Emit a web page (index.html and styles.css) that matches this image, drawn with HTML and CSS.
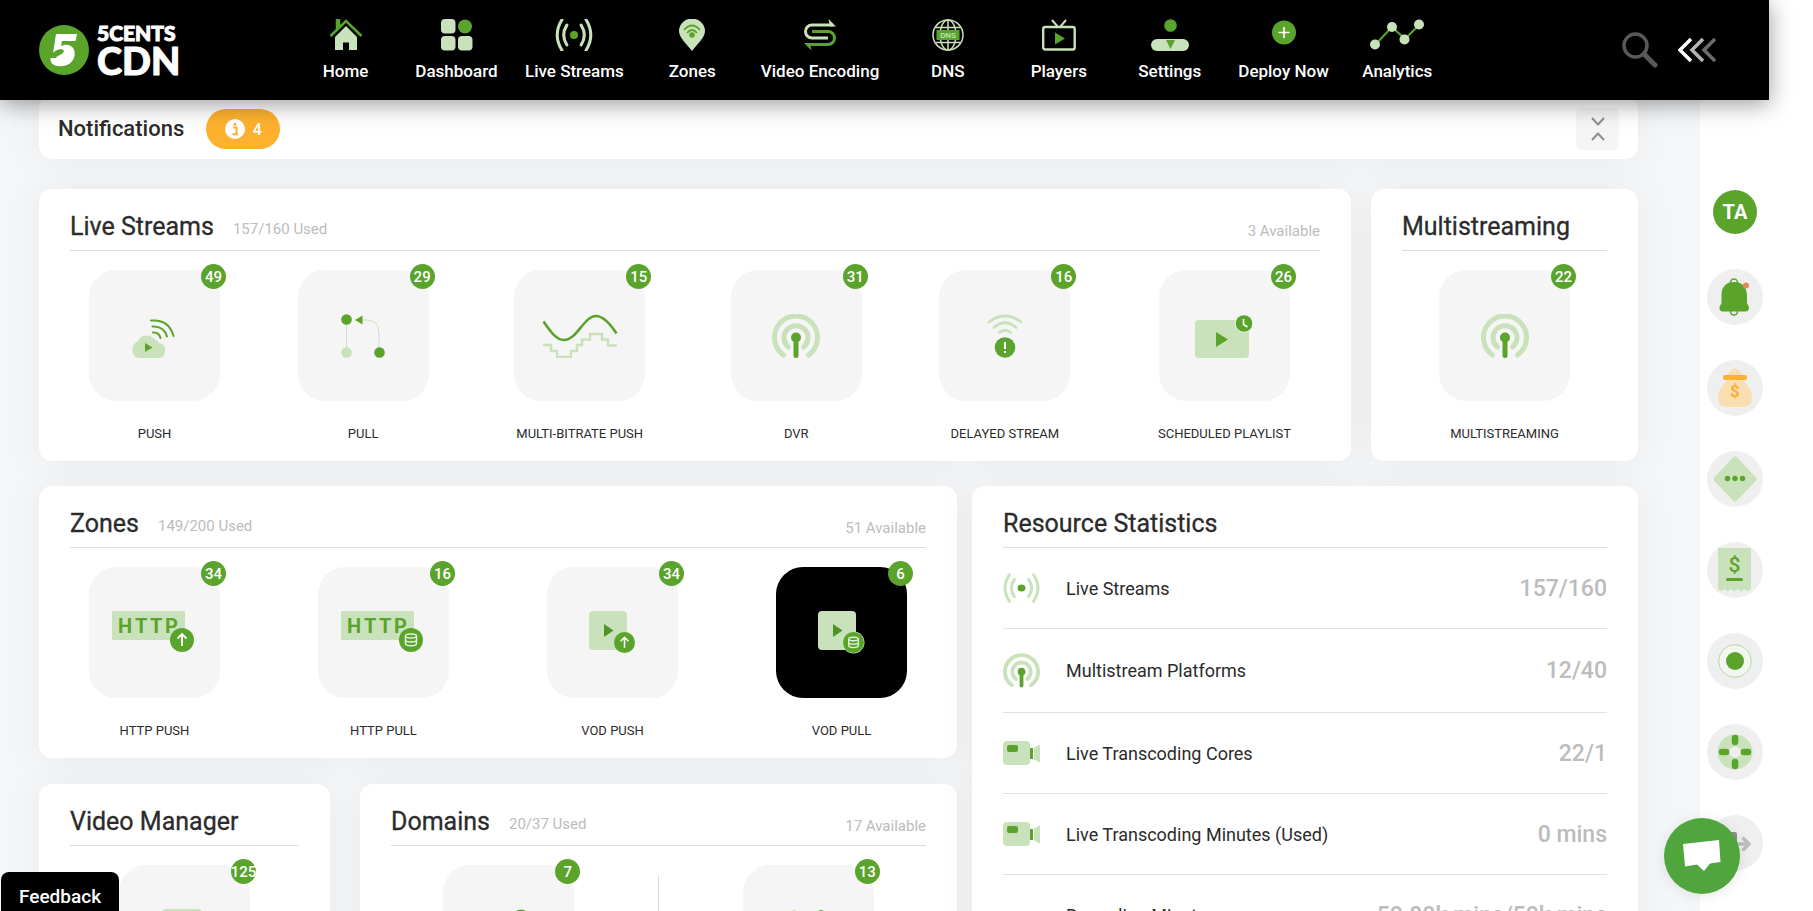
FILE: index.html
```html
<!DOCTYPE html>
<html lang="en">
<head>
<meta charset="utf-8">
<title>5centsCDN Dashboard</title>
<link rel="stylesheet" href="styles.css">
</head>
<body>
<svg class="defs" aria-hidden="true">
  <symbol id="i-antenna" viewBox="0 0 48 44">
    <g fill="none" stroke="#c9e2bb" stroke-width="5" stroke-linecap="round">
      <path d="M11.500 41A21.500 21.500 0 1 1 36.500 41"/>
      <path d="M16.500 33A12 12 0 1 1 31.500 33"/>
    </g>
    <circle cx="24" cy="23.500" r="5" fill="#5aa42b"/>
    <path d="M24 25V41.500" stroke="#5aa42b" stroke-width="5" stroke-linecap="round"/>
  </symbol>
  <symbol id="i-live" viewBox="0 0 42 38">
    <g fill="none" stroke="#c9e2bb" stroke-width="3.400" stroke-linecap="round">
      <path d="M7.500 2Q-3 19 7.500 36M34.500 2Q45 19 34.500 36M13 8Q6 19 13 30M29 8Q36 19 29 30"/>
    </g>
    <circle cx="21" cy="19" r="4.500" fill="#5aa42b"/>
  </symbol>
  <symbol id="i-camera" viewBox="0 0 37 24">
    <rect width="27" height="24" rx="4" fill="#c9e2bb"/>
    <rect x="4" y="4" width="11" height="7" rx="2" fill="#5aa42b"/>
    <path d="M27 7h3v11h-3z" fill="#5aa42b"/>
    <path d="M31 7l4-3q2-1 2 1v15q0 2-2 1l-4-3z" fill="#c9e2bb"/>
  </symbol>
  <symbol id="i-up" viewBox="0 0 24 24">
    <circle cx="12" cy="12" r="12" fill="#5aa42b"/>
    <path d="M12 18V6M7.500 10.500L12 6l4.500 4.500" fill="none" stroke="#fff" stroke-width="1.800"/>
  </symbol>
  <symbol id="i-db" viewBox="0 0 24 24">
    <circle cx="12" cy="12" r="12" fill="#5aa42b"/>
    <g fill="none" stroke="#e4f2db" stroke-width="1.500"><ellipse cx="12" cy="8" rx="5.500" ry="2"/><path d="M6.500 8v7.500c0 3 11 3 11 0V8M6.500 12c0 2.600 11 2.600 11 0"/></g>
  </symbol>
</svg>

<header class="topbar">
  <a class="logo" href="#" aria-label="5centsCDN">
    <svg width="50" height="50" viewBox="0 0 50 50"><circle cx="25" cy="25" r="25" fill="#5aa42b"/><path d="M17 9H38L36.500 16H23L22 21C31 17 37 23 35.500 31C33.500 39 27 42 19 41C14 40.500 11 38 11.500 33H17C18 30 24 30 25 26C24 23 17 24 14 28Z" fill="#fff"/></svg>
    <span class="logo-text"><span class="logo-small">5CENTS</span><span class="logo-big">CDN</span></span>
  </a>
  <nav class="nav">
    <a href="#"><svg width="34" height="32" viewBox="0 0 34 32"><path d="M17 7L28 18V31H20V23.500H14V31H6V18Z" fill="#c9e2bb"/><path d="M1.500 17L17 2L32.500 17M8 10V1H10V8" fill="none" stroke="#5aa42b" stroke-width="2.500"/></svg><span>Home</span></a>
    <a href="#"><svg width="32" height="32" viewBox="0 0 32 32"><g fill="#c9e2bb"><rect width="14.500" height="14.500" rx="4"/><rect y="17" width="14.500" height="14.500" rx="4"/><rect x="17" y="17" width="14.500" height="14.500" rx="4"/></g><circle cx="24" cy="7.500" r="7" fill="#5aa42b"/></svg><span>Dashboard</span></a>
    <a href="#"><svg width="42" height="32" viewBox="0 0 42 32" preserveAspectRatio="none"><use href="#i-live" x="-1" y="-1" width="44" height="34"/></svg><span>Live Streams</span></a>
    <a href="#"><svg width="26" height="32" viewBox="0 0 26 32"><path d="M13 32C8 25 0 19 0 12A13 12.500 0 0 1 26 12C26 19 18 25 13 32Z" fill="#c9e2bb"/><g fill="none" stroke="#5aa42b" stroke-width="1.800"><path d="M5 11Q13 2 21 11M8 14Q13 8 18 14"/></g><circle cx="13" cy="16" r="2.800" fill="#5aa42b"/></svg><span>Zones</span></a>
    <a href="#"><svg width="32" height="32" viewBox="0 0 32 32"><g fill="none" stroke-width="3"><path d="M29 6H8a6.500 6.500 0 0 0 0 13H24" stroke="#c9e2bb"/><path d="M8 12.500H24a6.500 6.500 0 0 1 0 13H3" stroke="#5aa42b"/></g><path d="M24.500 0L32 7.500H26Z" fill="#c9e2bb"/><path d="M7.500 31.500L0 24H6Z" fill="#5aa42b"/></svg><span>Video Encoding</span></a>
    <a href="#"><svg width="32" height="32" viewBox="0 0 32 32"><g fill="none" stroke="#c9e2bb" stroke-width="1.500"><circle cx="16" cy="16" r="15"/><ellipse cx="16" cy="16" rx="8" ry="15"/><path d="M16 1V31M4 8.500H28M4 23.500H28"/></g><rect x="4.500" y="11" width="23" height="10" fill="#5aa42b"/><text x="16" y="19" text-anchor="middle" class="dns-text">DNS</text></svg><span>DNS</span></a>
    <a href="#"><svg width="34" height="32" viewBox="0 0 34 32"><rect x="1.200" y="8" width="31.500" height="22.500" rx="2" fill="none" stroke="#c9e2bb" stroke-width="2.400"/><path d="M10 1L16 8M24 1L18 8" stroke="#c9e2bb" stroke-width="2"/><path d="M13 13.500L23 19.500L13 25.500Z" fill="#5aa42b"/></svg><span>Players</span></a>
    <a href="#"><svg width="38" height="32" viewBox="0 0 38 32"><circle cx="19.500" cy="6.500" r="6.300" fill="#5aa42b"/><rect y="20" width="38" height="12" rx="6" fill="#c9e2bb"/><path d="M15 21H24L19.500 30Z" fill="#5aa42b"/></svg><span>Settings</span></a>
    <a href="#"><svg width="24" height="32" viewBox="0 0 24 32"><circle cx="12" cy="13.500" r="12" fill="#5aa42b"/><path d="M12 8V19M6.500 13.500H17.500" stroke="#fff" stroke-width="1.600"/></svg><span>Deploy Now</span></a>
    <a href="#"><svg width="56" height="32" viewBox="0 0 56 32"><path d="M6 26L23 8L36 20L50 6" fill="none" stroke="#5aa42b" stroke-width="2"/><g fill="#c9e2bb"><circle cx="6" cy="25.500" r="5"/><circle cx="23" cy="8" r="5"/><circle cx="35.500" cy="20.500" r="5"/><circle cx="50" cy="5.500" r="5"/></g></svg><span>Analytics</span></a>
  </nav>
  <div class="tools">
    <button aria-label="Search"><svg width="36" height="36" viewBox="0 0 36 36" fill="none" stroke="#595959"><circle cx="13.500" cy="13.500" r="11.500" stroke-width="3.500"/><path d="M22 22L33 33" stroke-width="5" stroke-linecap="round"/></svg></button>
    <button aria-label="Collapse sidebar"><svg width="38" height="26" viewBox="0 0 38 26" fill="none" stroke-width="3.500"><path d="M13 2L2 13L13 24" stroke="#fff"/><path d="M25 2L14 13L25 24" stroke="#b5b5b5"/><path d="M37 2L26 13L37 24" stroke="#6b6b6b"/></svg></button>
  </div>
</header>

<div class="shell">
<main class="content">
  <section class="card notice">
    <h2>Notifications</h2>
    <span class="pill"><svg width="20" height="20" viewBox="0 0 20 20"><circle cx="10" cy="10" r="10" fill="#fff"/><path d="M8 8.500h3.500V15M7.500 15.200h5.500" fill="none" stroke="#fdb12e" stroke-width="2"/><circle cx="10" cy="5.200" r="1.500" fill="#fdb12e"/></svg>4</span>
    <button class="toggle" aria-label="Expand notifications"><svg width="14" height="26" viewBox="0 0 14 26" fill="none" stroke="#8f8f8f" stroke-width="2"><path d="M1 2L7 8.500L13 2M1 24L7 17.500L13 24"/></svg></button>
  </section>

  <div class="row row-streams">
    <section class="card panel">
      <div class="head"><h2>Live Streams</h2><span class="used">157/160 Used</span><span class="avail">3 Available</span></div>
      <div class="tiles">
        <a class="item" href="#"><span class="tile"><svg width="48" height="44" viewBox="0 0 48 44"><path d="M8 44a8 8.500 0 0 1-1-16.500C8 22 18 18 24 25.500c2 1 3 2 4 3.500c10 2 7 15 0 15Z" fill="#c9e2bb"/><path d="M14 29L21.500 33.500L14 38Z" fill="#5aa42b"/><g fill="none" stroke="#5aa42b" stroke-width="2" stroke-linecap="round"><path d="M20 6.500Q38 5 42.500 22M21.500 12.500Q33 12 36 22.500M22 18.500Q28 18 29.500 24"/></g></svg><b class="badge">49</b></span><span class="label">PUSH</span></a>
        <a class="item" href="#"><span class="tile"><svg width="44" height="44" viewBox="0 0 44 44"><path d="M5.500 5V38M20 6H26Q38 6 38 20V36" fill="none" stroke="#c9e2bb" stroke-width="1"/><g fill="#5aa42b"><circle cx="5.500" cy="5.500" r="5.300"/><circle cx="38.500" cy="38.500" r="5.300"/><path d="M14 6L21.500 1.500V10.500Z"/></g><circle cx="5.500" cy="38.500" r="5.300" fill="#c9e2bb"/></svg><b class="badge">29</b></span><span class="label">PULL</span></a>
        <a class="item" href="#"><span class="tile"><svg width="76" height="44" viewBox="0 0 76 44" fill="none"><path d="M1 31H9V37H15V43H29V37H35V31H40V25.500H48V20H60V25.500H66V31.500H75" stroke="#c9e2bb" stroke-width="2.400"/><path d="M1.500 7.500C10 20 15 26 22 26C35 26 42 2 54 2C61 2 67 8 74.500 19.500" stroke="#5aa42b" stroke-width="2.600"/></svg><b class="badge">15</b></span><span class="label">MULTI-BITRATE PUSH</span></a>
        <a class="item" href="#"><span class="tile"><svg width="48" height="44"><use href="#i-antenna"/></svg><b class="badge">31</b></span><span class="label">DVR</span></a>
        <a class="item" href="#"><span class="tile"><svg width="36" height="44" viewBox="0 0 36 44"><g fill="none" stroke="#c9e2bb" stroke-width="2.800" stroke-linecap="round"><path d="M2 8Q18-4 34 8M7 13.500Q18 4 29 13.500M12.500 18.500Q18 14 23.500 18.500"/></g><circle cx="18" cy="33.500" r="10.300" fill="#5aa42b"/><path d="M18 28V35M18 37V39" stroke="#fff" stroke-width="2"/></svg><b class="badge">16</b></span><span class="label">DELAYED STREAM</span></a>
        <a class="item" href="#"><span class="tile"><svg width="58" height="44" viewBox="0 0 58 44"><rect y="6" width="54" height="38" rx="4" fill="#c9e2bb"/><path d="M21 18L33 25.500L21 33Z" fill="#5aa42b"/><circle cx="49" cy="9.500" r="8.800" fill="#5aa42b" stroke="#f5f5f5"/><path d="M48.500 5V10.500L52.500 13" fill="none" stroke="#fff" stroke-width="1.600"/></svg><b class="badge">26</b></span><span class="label">SCHEDULED PLAYLIST</span></a>
      </div>
    </section>
    <section class="card panel">
      <div class="head"><h2>Multistreaming</h2></div>
      <div class="tiles single">
        <a class="item" href="#"><span class="tile"><svg width="48" height="44"><use href="#i-antenna"/></svg><b class="badge">22</b></span><span class="label">MULTISTREAMING</span></a>
      </div>
    </section>
  </div>

  <div class="row row-main">
    <div class="stack">
      <section class="card panel">
        <div class="head"><h2>Zones</h2><span class="used">149/200 Used</span><span class="avail">51 Available</span></div>
        <div class="tiles">
          <a class="item" href="#"><span class="tile"><svg width="86" height="44" viewBox="0 0 86 44"><rect width="73" height="29" rx="1" fill="#c9e2bb"/><text class="http-text" x="6 23 38 53" y="22">HTTP</text><use href="#i-up" x="58" y="17" width="24" height="24"/></svg><b class="badge">34</b></span><span class="label">HTTP PUSH</span></a>
          <a class="item" href="#"><span class="tile"><svg width="86" height="44" viewBox="0 0 86 44"><rect width="73" height="29" rx="1" fill="#c9e2bb"/><text class="http-text" x="6 23 38 53" y="22">HTTP</text><use href="#i-db" x="58" y="17" width="24" height="24"/></svg><b class="badge">16</b></span><span class="label">HTTP PULL</span></a>
          <a class="item" href="#"><span class="tile"><svg width="48" height="44" viewBox="0 0 48 44"><rect width="38" height="39" rx="4" fill="#c9e2bb"/><path d="M15 13L24.500 19.500L15 26Z" fill="#4f9427"/><use href="#i-up" x="25" y="21" width="21" height="21"/></svg><b class="badge">34</b></span><span class="label">VOD PUSH</span></a>
          <a class="item" href="#"><span class="tile dark"><svg width="48" height="44" viewBox="0 0 48 44"><rect width="38" height="39" rx="4" fill="#c9e2bb"/><path d="M15 13L24.500 19.500L15 26Z" fill="#4f9427"/><circle cx="35.500" cy="31.500" r="11" fill="#c9e2bb"/><use href="#i-db" x="25" y="21" width="21" height="21"/></svg><b class="badge">6</b></span><span class="label">VOD PULL</span></a>
        </div>
      </section>
      <div class="row row-video">
        <section class="card panel">
          <div class="head"><h2>Video Manager</h2></div>
          <div class="tiles single">
            <a class="item" href="#"><span class="tile"><svg width="46" height="44" viewBox="0 0 46 44"><rect width="40" height="42" rx="4" fill="#c9e2bb"/><path d="M14 13L26 21L14 29Z" fill="#5aa42b"/></svg><b class="badge">125</b></span></a>
          </div>
        </section>
        <section class="card panel">
          <div class="head"><h2>Domains</h2><span class="used">20/37 Used</span><span class="avail">17 Available</span></div>
          <div class="tiles halves">
            <a class="item" href="#"><span class="tile"><svg width="44" height="44" viewBox="0 0 44 44"><circle cx="34" cy="10" r="8" fill="none" stroke="#5aa42b" stroke-width="3"/></svg><b class="badge">7</b></span></a>
            <span class="divider"></span>
            <a class="item" href="#"><span class="tile"><svg width="44" height="44" viewBox="0 0 44 44"><circle cx="8" cy="4" r="3" fill="#c9e2bb"/><circle cx="35" cy="4" r="3" fill="#5aa42b"/></svg><b class="badge">13</b></span></a>
          </div>
        </section>
      </div>
    </div>
    <section class="card panel stats">
      <div class="head"><h2>Resource Statistics</h2></div>
      <ul>
        <li><svg width="37" height="30" viewBox="0 0 42 38" preserveAspectRatio="none"><use href="#i-live" width="42" height="38"/></svg><span>Live Streams</span><strong>157/160</strong></li>
        <li><svg width="37" height="35"><use href="#i-antenna"/></svg><span>Multistream Platforms</span><strong>12/40</strong></li>
        <li><svg width="37" height="24"><use href="#i-camera"/></svg><span>Live Transcoding Cores</span><strong>22/1</strong></li>
        <li><svg width="37" height="24"><use href="#i-camera"/></svg><span>Live Transcoding Minutes (Used)</span><strong>0 mins</strong></li>
        <li><svg width="37" height="24"></svg><span>Recording Minutes</span><strong>50.00k mins/50k mins</strong></li>
      </ul>
    </section>
  </div>
</main>

<aside class="side">
  <button class="avatar">TA</button>
  <button class="round" aria-label="Alerts"><svg width="32" height="38" viewBox="0 0 32 38"><g fill="none" stroke="#5aa42b" stroke-width="1.500"><circle cx="15" cy="4.500" r="3.500"/><circle cx="15" cy="33.500" r="3.500"/></g><path d="M15 4C24 4 28 10 28 18V25L30 29Q30 34 26 33.500H4Q-1 33 1 28L2.500 25V17C2.500 10 6 4 15 4Z" fill="#5aa42b"/><circle cx="27" cy="7.500" r="3" fill="#e58a57"/></svg></button>
  <button class="round" aria-label="Credits"><svg width="34" height="40" viewBox="0 0 34 40"><path d="M17 0Q22 2 24 6V12Q34 20 34 31Q33 39 25 39H9Q1 39 0 31Q0 20 10 12V6Q12 2 17 0Z" fill="#f8deb0"/><rect x="5" y="7" width="24" height="5" rx="2" fill="#fdb12e"/><text class="coin" x="17" y="29" text-anchor="middle">$</text></svg></button>
  <button class="round" aria-label="More"><svg width="44" height="46" viewBox="0 0 44 46"><path d="M22 3L41 23L22 43L3 23Z" fill="#c9e2bb" stroke="#c9e2bb" stroke-width="5" stroke-linejoin="round"/><g fill="#5aa42b"><circle cx="14.500" cy="22.500" r="2.700"/><circle cx="22" cy="22.500" r="2.700"/><circle cx="29.500" cy="22.500" r="2.700"/></g></svg></button>
  <button class="round" aria-label="Invoices"><svg width="34" height="44" viewBox="0 0 34 44"><path d="M0 0H33V41L29.700 43.500L26.400 41L23 43.500L19.800 41L16.500 43.500L13 41L9.900 43.500L6.600 41L3.300 43.500L0 41Z" fill="#c9e2bb"/><text class="dollar" x="16.500" y="24" text-anchor="middle">$</text><path d="M9.500 31.500H23.500" stroke="#5aa42b" stroke-width="3" stroke-linecap="round"/></svg></button>
  <button class="round" aria-label="Record"><svg width="34" height="34" viewBox="0 0 34 34"><circle cx="17" cy="17" r="16.300" fill="#f3f6f1" stroke="#b5d8a1"/><circle cx="17" cy="17" r="9" fill="#5aa42b"/></svg></button>
  <button class="round" aria-label="Support"><svg width="36" height="36" viewBox="0 0 36 36"><circle cx="18" cy="18" r="11.500" fill="none" stroke="#c9e2bb" stroke-width="12"/><path d="M18 4V8M18 28V32M5 18H9M27 18H31" stroke="#5aa42b" stroke-width="6.500" stroke-linecap="round"/></svg></button>
  <button class="round" aria-label="Log out"><svg width="32" height="24" viewBox="0 0 32 24"><rect x="1" y="1" width="17" height="22" rx="2" fill="#8f8f8f"/><path d="M12 13H30M23.500 6.500L30 13L23.500 19.500" fill="none" stroke="#bdbdbd" stroke-width="3.500"/></svg></button>
</aside>
</div>

<button class="chat" aria-label="Open chat"><svg width="38" height="32" viewBox="0 0 38 32"><path d="M0 4L36 0L37.500 22L27 23.500L21 31L14 24.500L2 26.500Z" fill="#fff"/></svg></button>
<button class="feedback">Feedback</button>
</body>
</html>
```
FILE: styles.css
```css
* { box-sizing: border-box; }
body {
  margin: 0;
  height: 100vh;
  overflow: hidden;
  display: flex;
  flex-direction: column;
  background: #fff;
  color: #2b2b2b;
  font-family: Roboto, "Liberation Sans", sans-serif;
}
.defs { position: absolute; width: 0; height: 0; }
svg { display: block; flex: none; }
a { color: inherit; text-decoration: none; }
button { border: 0; padding: 0; background: none; font: inherit; cursor: pointer; }
h2 { margin: 0; font-weight: 400; font-size: 25px; line-height: 30px; -webkit-text-stroke: 0.3px; }

.topbar {
  flex: none;
  position: relative;
  z-index: 2;
  display: flex;
  align-items: center;
  height: 100px;
  margin-right: 44px;
  padding: 0 53px 0 39px;
  background: #000;
  box-shadow: 0 4px 22px rgba(0, 0, 0, 0.4);
}
.logo { display: flex; align-items: center; gap: 8px; width: 251px; color: #fff; font-family: Lato, sans-serif; font-weight: 900; }
.logo-text { display: flex; flex-direction: column; -webkit-text-stroke: 1px; }
.logo-small { font-size: 21px; line-height: 20px; }
.logo-big { font-size: 38px; line-height: 34px; }
.nav { display: flex; }
.nav a {
  min-width: 111px;
  padding: 0 13px;
  display: flex;
  flex-direction: column;
  align-items: center;
  gap: 9px;
  color: #fff;
  font-size: 17px;
  font-weight: 500;
  line-height: 22px;
}
.dns-text { fill: #c9e2bb; font-size: 8px; font-weight: 500; }
.tools { display: flex; align-items: center; gap: 20px; margin-left: auto; }

.shell { flex: 1; min-height: 0; display: flex; }
.content {
  flex: 1;
  min-width: 0;
  overflow: hidden;
  display: flex;
  flex-direction: column;
  padding: 0 62px 0 39px;
  background: #f4f6f8;
}
.card { background: #fff; border-radius: 13px; box-shadow: 0 0 40px rgba(0, 0, 0, 0.05); }
.notice {
  flex: none;
  display: flex;
  align-items: center;
  margin-top: -4px;
  height: 63px;
  padding: 3px 19px 0;
}
.notice h2 { font-size: 22px; font-weight: 500; -webkit-text-stroke: 0; }
.pill {
  display: flex;
  align-items: center;
  justify-content: center;
  gap: 8px;
  width: 74px;
  height: 40px;
  margin-left: 22px;
  border-radius: 20px;
  background: #fdb12e;
  color: #fff;
  font-size: 16px;
  font-weight: 500;
}
.toggle { display: grid; place-items: center; width: 43px; height: 42px; margin-left: auto; border-radius: 5px; background: #f5f5f5; }

.row { flex: none; display: grid; }
.row-streams { grid-template-columns: 1312fr 267fr; gap: 20px; margin: 30px 0 25px; }
.row-main { grid-template-columns: 918fr 666fr; gap: 15px; }
.row-video { grid-template-columns: 291fr 597fr; gap: 30px; }
.stack { display: flex; flex-direction: column; gap: 26px; min-width: 0; }

.panel { min-width: 0; padding: 22px 31px 18px; }
.head { display: flex; align-items: flex-end; height: 40px; padding-bottom: 8px; border-bottom: 1px solid #dedede; }
.used, .avail { color: #bcbcbc; font-size: 15px; line-height: 22px; }
.used { margin-left: 19px; line-height: 26px; }
.avail { margin-left: auto; }

.tiles { display: flex; justify-content: space-between; padding-top: 19px; }
.single { justify-content: center; }
.item { display: flex; flex-direction: column; align-items: center; gap: 24px; }
.tile {
  position: relative;
  display: grid;
  place-items: center;
  width: 131px;
  height: 131px;
  margin: 0 19px;
  border-radius: 27px;
  background: #f5f5f5;
}
.dark { background: #000; }
.badge {
  position: absolute;
  top: -6px;
  right: -6px;
  width: 25px;
  height: 25px;
  border-radius: 50%;
  background: #5aa42b;
  color: #fff;
  display: flex;
  align-items: center;
  justify-content: center;
  font-size: 15px;
  font-weight: 500;
}
.label { padding: 0 29px; font-size: 13px; line-height: 18px; white-space: nowrap; }
.single .label { padding: 0; }
.http-text { fill: #5aa42b; font-size: 20px; font-weight: 700; }
.halves .item { flex: 0 0 44%; height: 173px; }
.divider { width: 1px; margin-top: 10px; background: #dedede; }

.stats ul { list-style: none; margin: 0; padding: 0; }
.stats li { display: flex; align-items: center; min-height: 81px; padding: 24px 0; border-bottom: 1px solid #e2e2e2; font-size: 18px; }
.stats li span { margin-left: 26px; }
.stats li strong { margin-left: auto; color: #bcbcbc; font-size: 23px; font-weight: 500; }

.side { flex: none; width: 113px; display: flex; flex-direction: column; align-items: flex-start; gap: 35px; padding: 90px 0 0 7px; }
.avatar { flex: none; width: 44px; height: 44px; margin: 0 6px; border-radius: 50%; background: #5aa42b; color: #fff; font-size: 20px; font-weight: 700; }
.round { flex: none; display: grid; place-items: center; width: 56px; height: 56px; border-radius: 50%; background: #efefef; }
.coin { fill: #fdb12e; font-size: 17px; font-weight: 700; }
.dollar { fill: #5aa42b; font-size: 21px; font-weight: 500; }

.chat {
  position: fixed;
  right: 73px;
  bottom: 17px;
  z-index: 3;
  display: grid;
  place-items: center;
  width: 76px;
  height: 76px;
  border-radius: 50%;
  background: #50a63c;
  box-shadow: 0 2px 14px rgba(0, 0, 0, 0.1);
}
.feedback {
  position: fixed;
  left: 1px;
  bottom: 0;
  z-index: 3;
  padding: 13px 18px 3px;
  border-radius: 8px 8px 0 0;
  background: #000;
  color: #fff;
  font-size: 19px;
  font-weight: 500;
  line-height: 23px;
}
```
